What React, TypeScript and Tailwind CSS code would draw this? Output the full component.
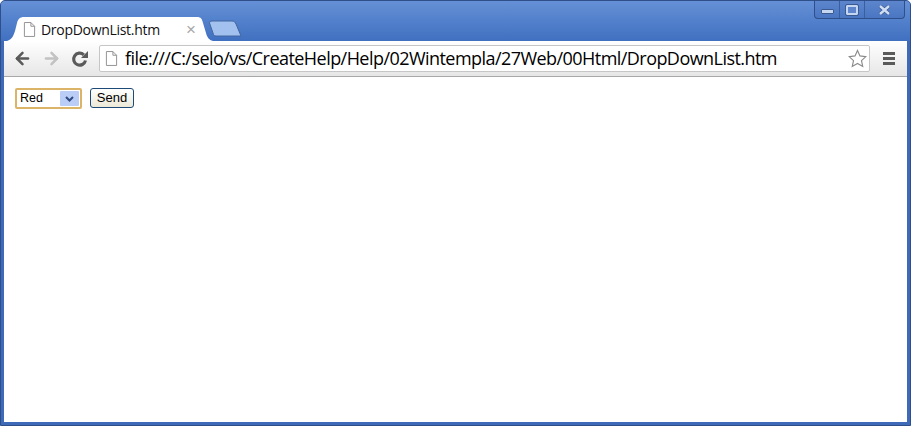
import { ArrowLeft, ArrowRight } from 'lucide-react'

function PageIcon({ className }: { className: string }) {
  return (
    <svg className={className} viewBox="0 0 14 16" fill="none" stroke="#8c8c8c" strokeWidth={1}>
      <path d="M1.5 0.5H8.5L12.5 4.5V15.5H1.5Z" fill="#fff" />
      <path d="M8.5 0.5V4.5H12.5" />
    </svg>
  )
}

function CaptionButtons() {
  return (
    <div className="mr-[5px] flex h-[18px] rounded-b-[4px] border border-t-0 border-[#2f4f8a] bg-gradient-to-b from-[#5c85cc] to-[#4a76c2]">
      <div className="flex w-[25px] items-center justify-center border-r border-[#3a5f9f]">
        <div className="mt-[4px] h-[5px] w-[13px] rounded-[1px] border border-[#3a5a90] bg-[#c5d6f0]" />
      </div>
      <div className="flex w-[25px] items-center justify-center border-r border-[#3a5f9f]">
        <div className="h-[10px] w-[12px] rounded-[1px] border-2 border-[#c5d6f0] bg-[#5f86cc] outline outline-1 outline-[#3a5a90]" />
      </div>
      <div className="flex w-[39px] items-center justify-center">
        <svg className="h-[10px] w-[13px]" viewBox="0 0 13 10">
          <path d="M2 1L11 9M11 1L2 9" stroke="#3a5a90" strokeWidth={3.8} />
          <path d="M2 1L11 9M11 1L2 9" stroke="#d0def4" strokeWidth={2.4} />
        </svg>
      </div>
    </div>
  )
}

function Tab() {
  return (
    <div className="relative flex h-[24px] w-[200px] items-center pl-[16px] pr-[11px]">
      <svg className="absolute left-0 top-0 h-[24px] w-[208px]" viewBox="0 0 208 24">
        <path d="M0 24C5 22 6 20 8 14L10 6C11 2 13 0 17 0H190C194 0 195 2 196 6L199 16C200 20 202 23 206 24Z" fill="#ffffff" />
      </svg>
      <PageIcon className="relative h-[15px] w-[13px] shrink-0" />
      <span className="relative ml-[5px] flex-1 font-['Open_Sans',sans-serif] text-[14px] tracking-[-0.3px] text-[#111]">
        DropDownList.htm
      </span>
      <span className="relative text-[17px] leading-none text-[#a8a8a8]">×</span>
    </div>
  )
}

export default function App() {
  return (
    <div className="flex h-[426px] w-[911px] flex-col overflow-hidden rounded-t-[5px] border border-[#2f4f8a] bg-[#3f6ab8] font-['Liberation_Sans',Arial,sans-serif]">
      <div className="flex h-[40px] shrink-0 items-start justify-between bg-gradient-to-b from-[#6590d6] to-[#4070c0]">
        <div className="ml-[6px] mt-[16px] flex items-start">
          <Tab />
          <svg className="ml-[1px] mt-[3px] h-[17px] w-[34px]" viewBox="0 0 34 17">
            <path d="M1.500 3C1.500 2 2.500 1 4 1H24C26 1 27 2 28 4L33 16H8C6 16 5.500 15 5 13Z" fill="#a3c1ef" stroke="#41679f" strokeWidth={1} />
          </svg>
        </div>
        <CaptionButtons />
      </div>

      <div className="mx-[3px] flex h-[36px] shrink-0 items-center border-b border-[#a8a8a8] bg-gradient-to-b from-white to-[#e6e6e6] pl-[9px] pr-[12px]">
        <ArrowLeft className="h-[19px] w-[19px] text-[#5a5a5a]" strokeWidth={3.2} />
        <ArrowRight className="ml-[10px] h-[19px] w-[19px] text-[#c2c2c2]" strokeWidth={3.2} />
        <svg className="ml-[10px] h-[18px] w-[18px]" viewBox="0 0 18 18" fill="none">
          <path d="M14.500 10.500A6 6 0 1 1 12.800 4.800" stroke="#5a5a5a" strokeWidth={3.2} />
          <path d="M10 8H17V1Z" fill="#5a5a5a" />
        </svg>
        <div className="ml-[10px] flex h-[27px] flex-1 items-center rounded-[2px] border border-[#c6c6c6] bg-white pl-[5px] pr-[2px]">
          <PageIcon className="h-[15px] w-[13px] shrink-0" />
          <span className="ml-[7px] flex-1 font-['Open_Sans',sans-serif] text-[18px] tracking-[-0.55px] text-black">
            file:///C:/selo/vs/CreateHelp/Help/02Wintempla/27Web/00Html/DropDownList.htm
          </span>
          <svg className="h-[19px] w-[19px]" viewBox="0 0 20 20" fill="#fff" stroke="#8a8a8a" strokeWidth={1.2}>
            <path d="M10 1.500L12.600 7.300L18.800 8L14.200 12.200L15.500 18.400L10 15.200L4.500 18.400L5.800 12.200L1.200 8L7.400 7.300Z" />
          </svg>
        </div>
        <div className="ml-[13px] flex w-[12px] flex-col gap-[2px]">
          <div className="h-[3px] bg-[#5a5a5a]" />
          <div className="h-[3px] bg-[#5a5a5a]" />
          <div className="h-[3px] bg-[#5a5a5a]" />
        </div>
      </div>

      <div className="mx-[3px] mb-[3px] flex flex-1 items-start gap-[8px] bg-white pl-[11px] pt-[11px]">
        <div className="flex h-[21px] w-[67px] items-center rounded-[2px] border-2 border-[#dcb468] bg-white pl-[3px] pr-[1px] text-[12.500px] text-black">
          <span className="flex-1">Red</span>
          <div className="flex h-[15px] w-[19px] items-center justify-center rounded-[1px] bg-[#b9cdf7]">
            <svg className="h-[6px] w-[9px]" viewBox="0 0 9 6" fill="none" stroke="#2f4a80" strokeWidth={2}>
              <path d="M1 1L4.500 4.500L8 1" />
            </svg>
          </div>
        </div>
        <div className="flex h-[20px] w-[44px] items-center justify-center rounded-[3px] border border-[#1e4a78] bg-gradient-to-b from-white to-[#ece9d8] text-[13px] text-black">
          Send
        </div>
      </div>
    </div>
  )
}
